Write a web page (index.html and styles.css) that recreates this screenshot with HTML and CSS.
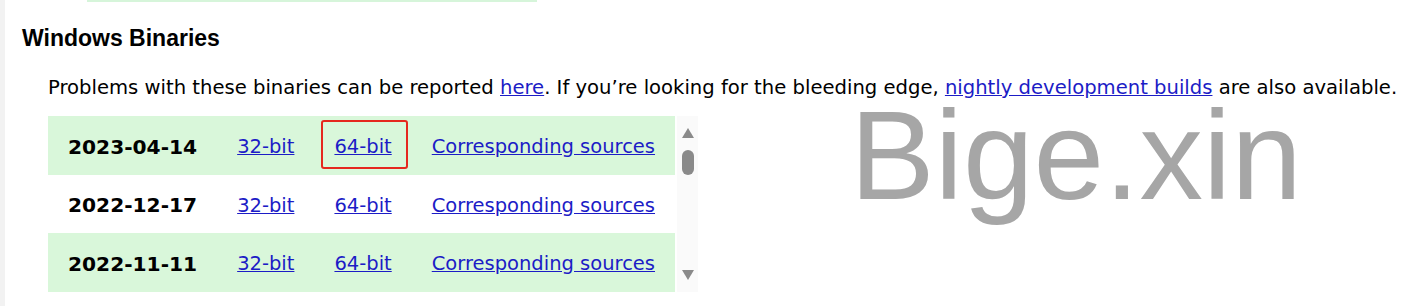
FILE: index.html
```html
<!DOCTYPE html>
<html lang="en">
<head>
<meta charset="utf-8">
<title>Windows Binaries</title>
<link rel="stylesheet" href="styles.css">
</head>
<body>
<div class="page">
  <div class="prev-edge"></div>
  <section class="section">
    <h2 class="title">Windows Binaries</h2>
    <div class="content">
      <p class="intro">Problems with these binaries can be reported <a href="#">here</a>. If you’re looking for the bleeding edge, <a href="#">nightly development builds</a> are also available.</p>
      <div class="downloads">
        <div class="scroller">
          <table class="builds">
            <tr class="odd">
              <td class="date">2023-04-14</td>
              <td><a href="#">32-bit</a></td>
              <td><span class="marked"><a href="#">64-bit</a></span></td>
              <td><a href="#">Corresponding sources</a></td>
            </tr>
            <tr>
              <td class="date">2022-12-17</td>
              <td><a href="#">32-bit</a></td>
              <td><a href="#">64-bit</a></td>
              <td><a href="#">Corresponding sources</a></td>
            </tr>
            <tr class="odd">
              <td class="date">2022-11-11</td>
              <td><a href="#">32-bit</a></td>
              <td><a href="#">64-bit</a></td>
              <td><a href="#">Corresponding sources</a></td>
            </tr>
          </table>
        </div>
        <div class="scrollbar">
          <span class="arrow up"></span>
          <span class="thumb"></span>
          <span class="track-rest"></span>
          <span class="arrow down"></span>
        </div>
      </div>
    </div>
  </section>
</div>
<div class="watermark">Bige.xin</div>
</body>
</html>
```
FILE: styles.css
```css
html, body {
  margin: 0;
  padding: 0;
  background: #ffffff;
}

body {
  width: 1421px;
  height: 306px;
  overflow: hidden;
  position: relative;
  font-family: "DejaVu Sans", Verdana, sans-serif;
  color: #000;
}

.page {
  border-left: 5px solid #f2f2f2;
  height: 306px;
  box-sizing: border-box;
}

.prev-edge {
  margin-left: 82px;
  width: 450px;
  height: 2px;
  background: #d6f5da;
}

.section {
  padding-left: 17px;
}

.title {
  margin: 24px 0 0 0;
  font-family: "Liberation Sans", Arial, sans-serif;
  font-weight: bold;
  font-size: 23px;
  line-height: 25px;
}

.content {
  margin-left: 26px;
}

.intro {
  margin: 26px 0 0 0;
  font-size: 19.6px;
  line-height: 22px;
  white-space: nowrap;
}

a {
  color: #1c1cc6;
  text-decoration: underline;
}

.downloads {
  margin-top: 17px;
  display: flex;
  align-items: stretch;
  height: 176px;
}

.scroller {
  overflow: hidden;
  height: 176px;
}

.builds {
  border-collapse: collapse;
  border-spacing: 0;
}

.builds td {
  padding: 3px 20px 0 20px;
  height: 55.5px;
  font-size: 19.5px;
  white-space: nowrap;
  vertical-align: middle;
}

.builds tr.odd td {
  background: #d9f7da;
}

.builds td.date {
  font-weight: bold;
  font-size: 20.2px;
}

.marked {
  position: relative;
  display: inline-block;
}

.marked::after {
  content: "";
  position: absolute;
  left: -13px;
  right: -16px;
  top: -15px;
  bottom: -11px;
  border: 2px solid #e5281e;
  border-radius: 3px;
}

.scrollbar {
  width: 21px;
  margin-left: 2px;
  background: #fafafa;
  display: flex;
  flex-direction: column;
  align-items: center;
}

.arrow {
  width: 0;
  height: 0;
  border-left: 6.5px solid transparent;
  border-right: 6.5px solid transparent;
}

.arrow.up {
  margin-top: 12px;
  border-bottom: 10px solid #8a8a8a;
}

.arrow.down {
  margin-bottom: 12px;
  border-top: 10px solid #8a8a8a;
}

.thumb {
  margin-top: 12px;
  width: 12px;
  height: 25px;
  border-radius: 6px;
  background: #8a8a8a;
}

.track-rest {
  flex: 1;
}

.watermark {
  position: absolute;
  left: 850px;
  top: 105px;
  font-family: "Liberation Sans", Arial, sans-serif;
  font-size: 127px;
  line-height: 100px;
  color: #a6a6a6;
  white-space: nowrap;
  pointer-events: none;
}
```
